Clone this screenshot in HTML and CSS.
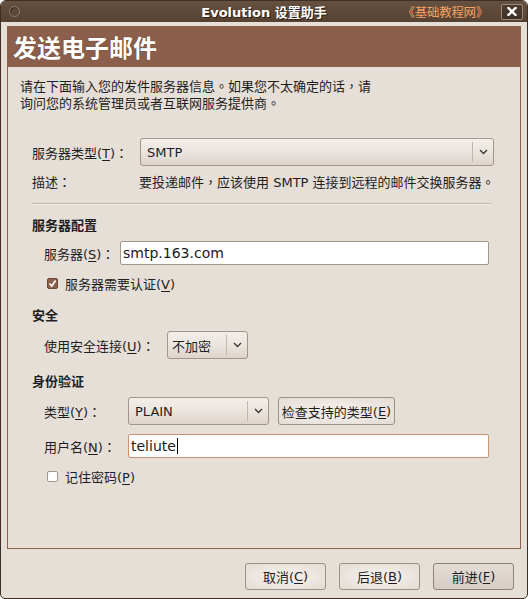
FILE: index.html
```html
<!DOCTYPE html>
<html lang="zh-CN">
<head>
<meta charset="utf-8">
<title>Evolution 设置助手</title>
<link rel="stylesheet" href="styles.css">
</head>
<body>
<div class="window">
  <div class="titlebar">
    <div class="tb-left"><span class="wm-dot"></span></div>
    <div class="title">Evolution 设置助手</div>
    <div class="tb-right">
      <span class="watermark">《基础教程网》</span>
      <span class="close"><svg width="10" height="9" viewBox="0 0 10 9"><path d="M1.5 1 L8.5 8 M8.5 1 L1.5 8" stroke="#fff" stroke-width="2.4" stroke-linecap="square"/></svg></span>
    </div>
  </div>
  <div class="frame">
    <div class="panel">
      <div class="header">发送电子邮件</div>
      <div class="content">
        <p class="intro">请在下面输入您的发件服务器信息<span class="p" lang="zh-TW">。</span>如果您不太确定的话<span class="p" lang="zh-TW">，</span>请<br>询问您的系统管理员或者互联网服务提供商<span class="p" lang="zh-TW">。</span></p>
        <div class="form">
          <div class="row row-type">
            <span class="label lw-type">服务器类型(<u>T</u>)<span class="p" lang="zh-TW">：</span></span>
            <div class="combo combo-server">
              <span class="combo-text">SMTP</span>
              <span class="combo-btn"><svg width="9" height="6" viewBox="0 0 9 6"><path d="M1 1 L4.5 4.5 L8 1" fill="none" stroke="#3a3a3a" stroke-width="1.4"/></svg></span>
            </div>
          </div>
          <div class="row row-desc">
            <span class="label lw-desc">描述<span class="p" lang="zh-TW">：</span></span>
            <span class="desc-text">要投递邮件<span class="p" lang="zh-TW">，</span>应该使用 SMTP 连接到远程的邮件交换服务器<span class="p" lang="zh-TW">。</span></span>
          </div>
          <div class="sep"></div>

          <div class="section-title st-first">服务器配置</div>
          <div class="sub">
            <div class="row row-entry">
              <span class="label lw-server">服务器(<u>S</u>)<span class="p" lang="zh-TW">：</span></span>
              <div class="entry entry-server">smtp.163.com</div>
            </div>
            <div class="check-row cr-auth">
              <span class="checkbox checked"><svg width="9" height="9" viewBox="0 0 9 9"><path d="M1.5 4.5 L3.7 7 L7.6 1.5" fill="none" stroke="#fff" stroke-width="1.8"/></svg></span>
              <span>服务器需要认证(<u>V</u>)</span>
            </div>
          </div>

          <div class="section-title st-sec">安全</div>
          <div class="sub">
            <div class="row row-secure">
              <span class="label lw-secure">使用安全连接(<u>U</u>)<span class="p" lang="zh-TW">：</span></span>
              <div class="combo combo-secure">
                <span class="combo-text ct-secure">不加密</span>
                <span class="combo-btn"><svg width="9" height="6" viewBox="0 0 9 6"><path d="M1 1 L4.5 4.5 L8 1" fill="none" stroke="#3a3a3a" stroke-width="1.4"/></svg></span>
              </div>
            </div>
          </div>

          <div class="section-title st-auth">身份验证</div>
          <div class="sub">
            <div class="row row-authtype">
              <span class="label lw-auth">类型(<u>Y</u>)<span class="p" lang="zh-TW">：</span></span>
              <div class="combo combo-auth">
                <span class="combo-text">PLAIN</span>
                <span class="combo-btn"><svg width="9" height="6" viewBox="0 0 9 6"><path d="M1 1 L4.5 4.5 L8 1" fill="none" stroke="#3a3a3a" stroke-width="1.4"/></svg></span>
              </div>
              <div class="btn btn-check">检查支持的类型(<u>E</u>)</div>
            </div>
            <div class="row row-user">
              <span class="label lw-auth">用户名(<u>N</u>)<span class="p" lang="zh-TW">：</span></span>
              <div class="entry entry-user focused">teliute<span class="caret"></span></div>
            </div>
            <div class="check-row cr-remember">
              <span class="checkbox"></span>
              <span>记住密码(<u>P</u>)</span>
            </div>
          </div>
        </div>
      </div>
    </div>
  </div>
  <div class="actions">
    <div class="btn btn-action">取消(<u>C</u>)</div>
    <div class="btn btn-action">后退(<u>B</u>)</div>
    <div class="btn btn-action btn-default">前进(<u>F</u>)</div>
  </div>
</div>
</body>
</html>
```

FILE: styles.css
```css
* { box-sizing: border-box; }
html, body { margin: 0; background: #ffffff; }
body {
  font-family: "DejaVu Sans", "Noto Sans CJK SC", sans-serif;
  font-size: 13px;
  color: #1e1e1e;
}
u { text-decoration: underline; text-underline-offset: 2px; }
.p {
  font-family: "Noto Sans CJK TC", "Noto Sans CJK SC", sans-serif;
  line-height: 0;
}

.window {
  width: 528px;
  height: 599px;
  border: 1px solid #3d2f25;
  border-radius: 6px 6px 5px 5px;
  background: #e6dfd8;
  overflow: hidden;
  display: flex;
  flex-direction: column;
}

/* title bar */
.titlebar {
  flex: none;
  height: 21px;
  background: linear-gradient(#66503f, #574232);
  display: grid;
  grid-template-columns: 1fr auto 1fr;
  align-items: center;
}
.tb-left { display: flex; align-items: center; padding-left: 8px; }
.wm-dot {
  width: 11px; height: 11px;
  border-radius: 50%;
  border: 1px solid #8f7f72;
  box-shadow: inset 1px 1px 0 #3b2c22;
}
.title {
  color: #ffffff;
  font-weight: bold;
  font-size: 13px;
  text-shadow: 1px 1px 0 #2a1e16;
  white-space: nowrap;
}
.tb-right {
  display: flex;
  align-items: center;
  justify-content: flex-end;
  padding-right: 4px;
  gap: 13px;
}
.watermark {
  color: #f3a164;
  font-family: "Noto Sans CJK SC", sans-serif;
  font-size: 12.5px;
  letter-spacing: -0.3px;
  white-space: nowrap;
}
.close {
  width: 22px; height: 16px;
  border: 1px solid #9a8a7d;
  border-radius: 2px;
  background: linear-gradient(#4e3c30, #3f3026);
  display: flex;
  align-items: center;
  justify-content: center;
}

/* frame & panel */
.frame {
  flex: none;
  padding: 4px 6px 0 6px;
}
.panel {
  height: 523px;
  border: 1px solid #8f604a;
  display: flex;
  flex-direction: column;
}
.header {
  flex: none;
  height: 40px;
  background: #8b5f4b;
  color: #ffffff;
  font-family: "Noto Sans CJK SC", sans-serif;
  font-weight: bold;
  font-size: 24px;
  line-height: 40px;
  padding-left: 5px;
  text-shadow: 0 0 1px rgba(40, 20, 10, 0.5);
}
.content {
  flex: 1;
  padding: 11px 12px 0 12px;
}
.intro {
  margin: 0;
  line-height: 17px;
}
.form { padding-left: 12px; }

.row { display: flex; align-items: center; }
.label { flex: none; white-space: nowrap; }
.lw-type { width: 108px; }
.lw-desc { width: 107px; }
.lw-server { width: 76px; }
.lw-secure { width: 123px; }
.lw-auth { width: 84px; }

.row-type { margin-top: 26px; height: 28px; }
.row-desc { margin-top: 8px; height: 18px; line-height: 18px; }
.sep {
  margin-top: 11px;
  width: 459px;
  height: 2px;
  border-top: 1px solid #c3b7ad;
  border-bottom: 1px solid #f3efeb;
}

.section-title {
  font-weight: bold;
  line-height: 18px;
  height: 18px;
}
.st-first { margin-top: 12px; }
.st-sec { margin-top: 15px; }
.st-auth { margin-top: 14px; }

.sub { padding-left: 12px; }
.row-entry { margin-top: 6px; height: 24px; }
.row-secure { margin-top: 6px; height: 28px; }
.row-authtype { margin-top: 6px; height: 28px; }
.row-user { margin-top: 9px; height: 24px; }

/* combo */
.combo {
  height: 28px;
  display: flex;
  align-items: stretch;
  border: 1px solid #a3958a;
  border-radius: 3px;
  background: linear-gradient(#f3eee9, #ebe5df 50%, #ddd4cc);
}
.combo-server { width: 354px; }
.combo-secure { width: 81px; }
.combo-auth { width: 141px; }
.combo-text {
  flex: 1;
  display: flex;
  align-items: center;
  padding-left: 6px;
  white-space: nowrap;
}
.ct-secure { padding-left: 4px; }
.combo-btn {
  flex: none;
  width: 21px;
  margin: 3px 0;
  border-left: 1px solid #c2b6ab;
  display: flex;
  align-items: center;
  justify-content: center;
}

/* entry */
.entry {
  height: 24px;
  background: #ffffff;
  border: 1px solid #a69689;
  border-radius: 2px;
  padding-left: 2px;
  display: flex;
  align-items: center;
  font-size: 14px;
  color: #1a1a1a;
}
.entry-server { width: 369px; }
.entry-user { width: 361px; }
.focused { border-color: #cd9370; }
.caret {
  display: inline-block;
  width: 1px;
  height: 16px;
  background: #000;
  margin-left: 1px;
}

/* checkbox rows */
.check-row {
  display: flex;
  align-items: center;
  height: 18px;
  padding-left: 3px;
  gap: 7px;
}
.cr-auth { margin-top: 9px; }
.cr-remember { margin-top: 9px; }
.checkbox {
  flex: none;
  width: 11px; height: 11px;
  border: 1px solid #a2968c;
  border-radius: 2px;
  background: #ffffff;
  display: flex;
  align-items: center;
  justify-content: center;
}
.checkbox.checked {
  background: #8b5f4b;
  border-color: #6c4736;
}

/* buttons */
.btn {
  height: 28px;
  border: 1px solid #9e9187;
  border-radius: 3px;
  background: radial-gradient(ellipse at center, #f1ece7 30%, #e4dcd5 100%);
  display: flex;
  align-items: center;
  justify-content: center;
  white-space: nowrap;
}
.btn-check { width: 117px; margin-left: 9px; }
.actions {
  flex: 1;
  display: flex;
  justify-content: flex-end;
  gap: 13px;
  padding: 14px 13px 0 0;
}
.btn-action { width: 81px; height: 27px; }
.btn-default {
  background: linear-gradient(#e4ddd6, #d5ccc3);
  border-color: #8f8278;
}
```
